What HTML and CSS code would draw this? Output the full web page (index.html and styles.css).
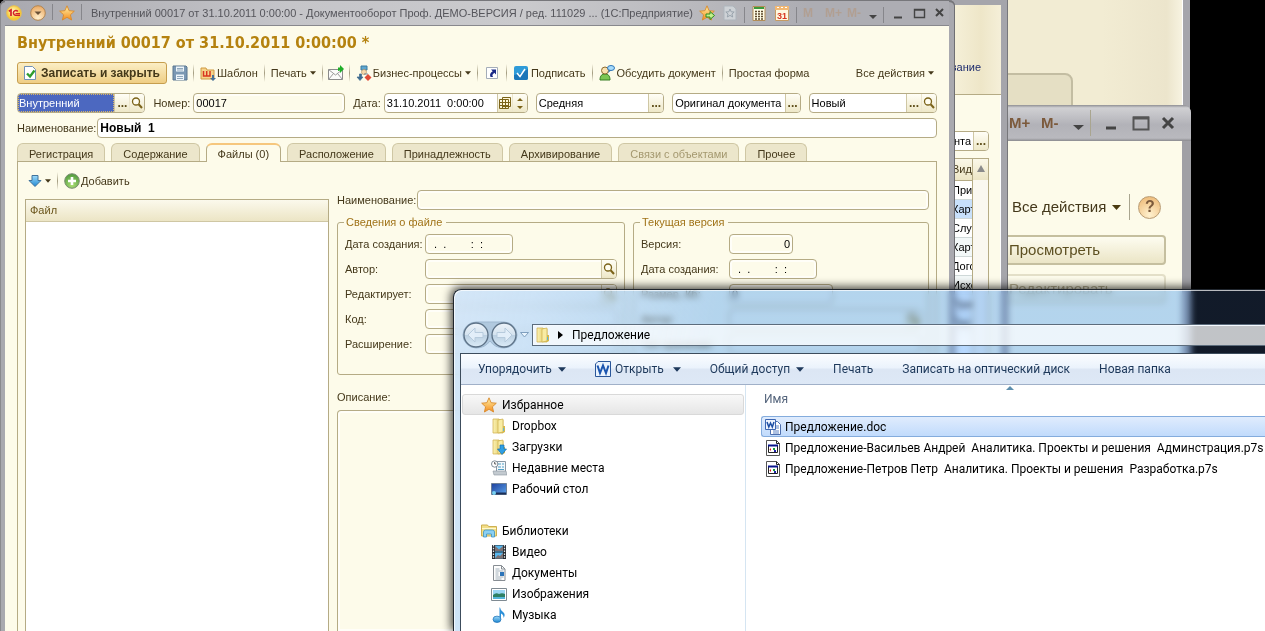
FILE: index.html
```html
<!DOCTYPE html>
<html lang="ru">
<head>
<meta charset="utf-8">
<title>Внутренний 00017 от 31.10.2011 0:00:00</title>
<link rel="stylesheet" href="styles.css">
</head>
<body>
<svg class="defs" aria-hidden="true">
  <defs>
    <linearGradient id="gFolder" x1="0" x2="1"><stop offset="0" stop-color="#fbf2b4"/><stop offset="1" stop-color="#dcc052"/></linearGradient>
    <linearGradient id="gStar" x1="0" x2="0" y1="0" y2="1"><stop offset="0" stop-color="#fff3a8"/><stop offset="1" stop-color="#f58c1e"/></linearGradient>
    <linearGradient id="gBlue" x1="0" x2="0" y1="0" y2="1"><stop offset="0" stop-color="#9fdcfb"/><stop offset="1" stop-color="#1f86d0"/></linearGradient>
    <radialGradient id="gYellow" cx=".45" cy=".4"><stop offset="0" stop-color="#fffbd0"/><stop offset="1" stop-color="#f8c82c"/></radialGradient>
    <radialGradient id="gOrange" cx=".5" cy=".85" r=".9"><stop offset="0" stop-color="#fff0cf"/><stop offset="1" stop-color="#e9a45a"/></radialGradient>
    <radialGradient id="gGreen" cx=".5" cy=".8" r=".8"><stop offset="0" stop-color="#a9dc74"/><stop offset="1" stop-color="#4f9a3c"/></radialGradient>
    <linearGradient id="gOrb" x1="0" x2="0" y1="0" y2="1"><stop offset="0" stop-color="#eef4fa"/><stop offset=".48" stop-color="#d5e3ef"/><stop offset=".5" stop-color="#bacfe1"/><stop offset="1" stop-color="#dcecf8"/></linearGradient>
    <linearGradient id="gDesk" x1="0" x2="1" y1="0" y2="1"><stop offset="0" stop-color="#1d3f9c"/><stop offset="1" stop-color="#5ba3ea"/></linearGradient>
    <symbol id="caret" viewBox="0 0 7 4"><path d="M0 0h7L3.500 4z"/></symbol>
    <symbol id="lens" viewBox="0 0 12 12"><circle cx="5" cy="4.500" r="3.500" fill="#fffdf0" stroke="#7b6319" stroke-width="1.300"/><path d="M7.600 7.300L11 11" stroke="#7b6319" stroke-width="2"/></symbol>
    <symbol id="folder" viewBox="0 0 16 16"><path d="M2 1h6l1 1h3v13H2z" fill="url(#gFolder)" stroke="#cfae45" stroke-width=".7"/><path d="M7 2l5-1v13l-5 1z" fill="#f8eca4" stroke="#cdb04c" stroke-width=".7"/><path d="M12 8h2v6l-2 1z" fill="#d5b84b"/><path d="M12.500 10v3" stroke="#5db6d6"/></symbol>
    <symbol id="star" viewBox="0 0 16 16"><path d="M8 .8l2.100 4.900 5.200.5-3.900 3.600 1.200 5.200L8 12.300 3.400 15l1.200-5.200L.7 6.200l5.200-.5z" fill="url(#gStar)" stroke="#d98a2b" stroke-width=".9"/></symbol>
    <symbol id="cert" viewBox="0 0 16 16"><path d="M1.500.5h10l3 3v12h-13z" fill="#fff" stroke="#555"/><path d="M11.500.5v3h3" fill="none" stroke="#222"/><path d="M3.500 5.500h9v7h-9z" fill="#fff" stroke="#222"/><path d="M3 4.500h10v2H3z" fill="#0a168c"/><path d="M4.500 9.500L6 8v3z" fill="#d11"/><path d="M8 8h2v2H8z" fill="#149a3b"/><path d="M9 10h2v2H9z" fill="#22a"/></symbol>
  </defs>
</svg>

<main class="desktop">

  <section class="win-back" aria-label="Фоновое окно"><div class="back-tab"></div></section>

  <section class="win-zoom" aria-label="Окно файлов">
    <header class="zoom-bar">
      <span class="mem">M+</span><span class="mem">M-</span>
      <svg class="zoom-caret" viewBox="0 0 11 5"><path d="M0 0h11L5.500 5z" fill="#444"/></svg>
      <i class="zoom-sep"></i>
      <svg class="zoom-ctl" viewBox="0 0 68 16"><path d="M1 13h10" stroke="#444" stroke-width="3"/><path d="M28.500 2.500h15v12h-15z" fill="none" stroke="#555" stroke-width="2"/><path d="M28 3h16" stroke="#555" stroke-width="3"/><path d="M58 3l10 10M68 3L58 13" stroke="#444" stroke-width="3"/></svg>
    </header>
    <div class="zoom-body">
      <div class="zoom-tools">
        <button class="zoom-link">Все действия</button>
        <svg class="zoom-caret small" viewBox="0 0 9 5"><path d="M0 0h9L4.500 5z" fill="#4a3b10"/></svg>
        <i class="zoom-sep"></i>
        <button class="help">?</button>
      </div>
      <button class="zoom-btn">Просмотреть</button>
      <button class="zoom-btn faded">Редактировать</button>
    </div>
  </section>

  <section class="win-list" aria-label="Список документов">
    <div class="list-head"><a href="#">Планирование</a></div>
    <div class="list-body">
      <div class="field list-field"><input class="right" value="Оригинал документа" aria-label="Оригинал документа"><button class="fbtn dots">...</button></div>
      <div class="list-grid">
        <table class="kinds">
          <thead><tr><th>Вид</th></tr></thead>
          <tbody><tr><td>Приказ</td></tr><tr class="sel"><td>Карточка</td></tr><tr><td>Служебная</td></tr><tr class="alt"><td>Карточка</td></tr><tr><td>Договор</td></tr><tr class="alt"><td>Исходящий</td></tr><tr><td>Приказ</td></tr><tr class="alt"><td>Письмо</td></tr></tbody>
        </table>
        <div class="scroll"><svg viewBox="0 0 8 7"><path d="M4 0l4 7H0z" fill="#8a8a8a"/></svg></div>
      </div>
    </div>
  </section>

  <section class="win-main" aria-label="Внутренний документ">
    <header class="bar">
      <svg class="i16" viewBox="0 0 16 16"><circle cx="8" cy="8" r="7.300" fill="url(#gYellow)" stroke="#e8bf52"/><path d="M2.800 6.200L5 5v6" fill="none" stroke="#d3202a" stroke-width="1.700"/><path d="M11.800 6.500A2.400 2.400 0 1 0 9.500 10.200H14" fill="none" stroke="#d3202a" stroke-width="1.500"/><path d="M9.500 8.500H14" stroke="#d3202a"/></svg>
      <svg class="i16 orb" viewBox="0 0 16 16"><circle cx="8" cy="8" r="7.300" fill="url(#gOrange)" stroke="#b28653"/><path d="M4.500 6.500h7L8 10z" fill="#6a5137"/></svg>
      <i class="bsep"></i>
      <svg class="i16 fav" viewBox="0 0 16 16"><use href="#star"/></svg>
      <i class="bsep"></i>
      <span class="caption">Внутренний 00017 от 31.10.2011 0:00:00 - Документооборот Проф. ДЕМО-ВЕРСИЯ / ред. 111029 ... (1С:Предприятие)</span>
      <span class="bar-tools">
        <svg class="i16" viewBox="0 0 16 16"><use href="#star"/><path d="M7 9h4V6.500l4.500 4-4.500 4V12H7z" fill="#c4f08a" stroke="#2e8a22"/></svg>
        <svg class="i16 pale" viewBox="0 0 16 16"><path d="M2 1h9l3 3v11H2z" fill="#dfe6ea" stroke="#a9b5bd"/><path d="M8 4l1.200 2.800 3 .2-2.300 2 .8 3L8 10.400 5.300 12l.8-3-2.300-2 3-.2z" fill="none" stroke="#8798a4"/></svg>
        <i class="bsep"></i>
        <svg class="i16" viewBox="0 0 16 16"><path d="M2 1.500h12v14H2z" fill="#fffce6" stroke="#b28d58"/><path d="M3 3h10" stroke="#3b9a3a" stroke-width="2"/><path d="M4 6.500h8M4 9h8M4 11.500h8M4 14h8" stroke="#5b472b" stroke-width="1.400" stroke-dasharray="2 1"/></svg>
        <svg class="i16 cal" viewBox="0 0 16 16"><path d="M1.500 1.500h13v14h-13z" fill="#fff8e0" stroke="#c59b64"/><path d="M1 1h14v4H1z" fill="#f2b872"/><path d="M3 2.500h10" stroke="#fff" stroke-dasharray="2 2"/><text x="8" y="14" class="cal-n">31</text></svg>
        <i class="bsep"></i>
        <span class="m">M</span><span class="m">M+</span><span class="m">M-</span>
        <svg class="drop" viewBox="0 0 8 4"><path d="M0 0h8L4 4z" fill="#444"/></svg>
        <i class="bsep"></i>
        <svg class="ctl" viewBox="0 0 54 14"><path d="M4 11.500h8" stroke="#444" stroke-width="2"/><path d="M24.500 3.500h10v8h-10zM24 4h11" fill="none" stroke="#444" stroke-width="1.400"/><path d="M46 3l7 7M53 3l-7 7" stroke="#444" stroke-width="2"/></svg>
      </span>
    </header>

    <div class="content">
      <h1>Внутренний 00017 от 31.10.2011 0:00:00 *</h1>

      <div class="toolbar">
        <button class="primary"><svg class="i14" viewBox="0 0 14 14"><path d="M1.500.5h8l3 3v10h-11z" fill="#fff" stroke="#7191b5"/><path d="M4 7.500l3 3 4.500-6" fill="none" stroke="#2f9c2c" stroke-width="2.400"/></svg>Записать и закрыть</button>
        <button class="tool solo"><svg class="i16" viewBox="0 0 16 16"><path d="M1 1h13l1 1v13H1z" fill="#7b98b3" stroke="#5b7690"/><path d="M4 1.500h8v5H4zM4 9.500h8v5.500H4z" fill="#eef5fa"/><path d="M5 3.500h6M5 5h6M5 11.500h6M5 13.500h6" stroke="#8fa7bb"/></svg></button>
        <i class="sep"></i>
        <button class="tool"><svg class="i16" viewBox="0 0 16 16"><path d="M1 3h5l1 2h7v9H1z" fill="#f6d48b" stroke="#cf9a43"/><path d="M3.500 6v5h6.500V6M6.700 6v5" fill="none" stroke="#d8341f" stroke-width="1.500"/><path d="M12 10v3h-2l3 3 3-3h-2v-3z" fill="#4a7397"/></svg>Шаблон</button>
        <i class="sep"></i>
        <button class="tool">Печать<svg class="caret"><use href="#caret"/></svg></button>
        <i class="sep"></i>
        <button class="tool solo"><svg class="i16" viewBox="0 0 16 16"><path d="M.5 4.500h14v10H.5z" fill="#fbfbfb" stroke="#8b8b8b"/><path d="M.5 4.500L7.500 10l7-5.500M.5 14.500l5-6M14.500 14.500l-5-6" fill="none" stroke="#999"/><path d="M10 6V2.500h2V0l4 4-4 4V5.500z" fill="#1fae28"/></svg></button>
        <i class="sep"></i>
        <button class="tool"><svg class="i16" viewBox="0 0 16 16"><path d="M5 1h6v4H5z" fill="#5ea7cf" stroke="#3a7ba0"/><circle cx="8" cy="7" r="2.500" fill="#f6d9ae" stroke="#b58a55" stroke-width=".6"/><path d="M3.500 9v3H1l3 3.500L7 12H5.500V9zM8 9h4" fill="#3f6b8f" stroke="#3f6b8f" stroke-width=".7"/><path d="M12 9l3.500 3.500L12 16l-3.500-3.500z" fill="#e14b36"/></svg>Бизнес-процессы<svg class="caret"><use href="#caret"/></svg></button>
        <i class="sep"></i>
        <button class="tool link"><svg class="i14" viewBox="0 0 14 14"><path d="M1.500 1.500h11v11h-11z" fill="#fff" stroke="#a4adb8"/><path d="M6 3.500h5v5L9.300 6.800 7.300 9 8 11H5.500C4.500 8.500 5 7 7.700 5.200z" fill="#1a2a86"/></svg></button>
        <i class="sep"></i>
        <button class="tool sign"><svg class="i14" viewBox="0 0 14 14"><rect width="14" height="14" rx="2" fill="#2f9bd8"/><path d="M0 9Q7 8 14 3v9a2 2 0 0 1-2 2H2a2 2 0 0 1-2-2z" fill="#1b76b8"/><path d="M3 7l3 3.500L11 3" fill="none" stroke="#fff" stroke-width="1.500"/></svg>Подписать</button>
        <i class="sep"></i>
        <button class="tool"><svg class="i16" viewBox="0 0 16 16"><path d="M1 15c0-4.500 2-6 5-6s5 1.500 5 6z" fill="#7cc653" stroke="#387e24"/><circle cx="6" cy="5.500" r="3.500" fill="#fbe2ae" stroke="#8c6a30"/><ellipse cx="12" cy="3" rx="3.500" ry="2.500" fill="#a8dcfb" stroke="#2f76b8"/><path d="M10 5L9 8l3-2.500z" fill="#2f76b8"/></svg>Обсудить документ</button>
        <i class="sep"></i>
        <button class="tool">Простая форма</button>
        <button class="tool all">Все действия<svg class="caret"><use href="#caret"/></svg></button>
      </div>

      <div class="row">
        <div class="field grow1"><input class="picked" value="Внутренний" aria-label="Вид документа"><button class="fbtn dots">...</button><button class="fbtn bare" aria-label="Открыть"><svg class="i12"><use href="#lens"/></svg></button></div>
        <label for="num">Номер:</label>
        <div class="field soft num"><input id="num" value="00017"></div>
        <label for="date">Дата:</label>
        <div class="field date"><input id="date" value="31.10.2011  0:00:00"><button class="fbtn" aria-label="Календарь"><svg class="i12" viewBox="0 0 12 12"><path d="M3.500.5h8v9h-8z" fill="#fff7d8" stroke="#7b6319"/><path d="M.5 2.500h9v9h-9zM.5 5.500h11M.5 8.500h9M3.500 2v10M6.500 2v10" fill="none" stroke="#7b6319"/></svg></button><button class="fbtn bare" aria-label="Изменить"><svg class="i12" viewBox="0 0 12 12"><path d="M3 4h6L6 1zM3 9h6l-3 3z" fill="#7b6319"/></svg></button></div>
        <div class="field grow1"><input value="Средняя" aria-label="Важность"><button class="fbtn dots">...</button></div>
        <div class="field grow1"><input value="Оригинал документа" aria-label="Форма"><button class="fbtn dots">...</button></div>
        <div class="field grow1"><input value="Новый" aria-label="Состояние"><button class="fbtn dots">...</button><button class="fbtn bare" aria-label="Открыть"><svg class="i12"><use href="#lens"/></svg></button></div>
      </div>

      <div class="row name-row">
        <label for="name">Наименование:</label>
        <div class="field wide"><input id="name" class="strong" value="Новый  1"></div>
      </div>

      <nav class="tabs" role="tablist">
        <button role="tab">Регистрация</button><button role="tab">Содержание</button><button role="tab" class="on" aria-selected="true">Файлы (0)</button><button role="tab">Расположение</button><button role="tab">Принадлежность</button><button role="tab">Архивирование</button><button role="tab" class="off">Связи с объектами</button><button role="tab">Прочее</button>
      </nav>

      <div class="panel">
        <div class="files">
          <div class="file-tools">
            <button class="tool"><svg class="i14" viewBox="0 0 14 14"><path d="M4 1.500h6v5h3l-6 6-6-6h3z" fill="url(#gBlue)" stroke="#41729b"/></svg><svg class="caret"><use href="#caret"/></svg></button>
            <i class="sep"></i>
            <button class="tool"><svg class="i16" viewBox="0 0 16 16"><circle cx="8" cy="8" r="7.300" fill="url(#gGreen)" stroke="#7a8c72"/><path d="M8 4v8M4 8h8" stroke="#fff" stroke-width="2.600"/></svg>Добавить</button>
          </div>
          <div class="file-box"><table class="file-table"><thead><tr><th>Файл</th></tr></thead></table></div>
        </div>

        <div class="details">
          <div class="row tight"><label for="fname">Наименование:</label><div class="field soft wide"><input id="fname"></div></div>
          <div class="groups">
            <fieldset class="g1">
              <legend>Сведения о файле</legend>
              <div class="line"><label for="f1">Дата создания:</label><div class="field soft w88"><input id="f1" value="  .  .        :  :"></div></div>
              <div class="line"><label for="f2">Автор:</label><div class="field soft wide"><input id="f2"><button class="fbtn" aria-label="Открыть"><svg class="i12"><use href="#lens"/></svg></button></div></div>
              <div class="line"><label for="f3">Редактирует:</label><div class="field soft wide"><input id="f3"><button class="fbtn" aria-label="Открыть"><svg class="i12"><use href="#lens"/></svg></button></div></div>
              <div class="line"><label for="f4">Код:</label><div class="field soft wide"><input id="f4"></div></div>
              <div class="line"><label for="f5">Расширение:</label><div class="field soft wide"><input id="f5"></div></div>
            </fieldset>
            <fieldset class="g2">
              <legend>Текущая версия</legend>
              <div class="line"><label for="v1">Версия:</label><div class="field soft w64"><input id="v1" class="right" value="0"></div></div>
              <div class="line"><label for="v2">Дата создания:</label><div class="field soft w88"><input id="v2" value="  .  .        :  :"></div></div>
              <div class="line"><label for="v3">Размер, Кб:</label><div class="field soft w104"><input id="v3" value="0"></div></div>
              <div class="line"><label for="v4">Автор:</label><div class="field soft wide"><input id="v4"><button class="fbtn bare" aria-label="Открыть"><svg class="i12"><use href="#lens"/></svg></button></div></div>
              <div class="line"><label for="v5">Тип хранения:</label><div class="field soft wide"><input id="v5"></div></div>
            </fieldset>
          </div>
          <label class="desc-label" for="desc">Описание:</label>
          <textarea id="desc"></textarea>
        </div>
      </div>
    </div>
  </section>

  <div class="glass-tint"></div>
  <section class="explorer" aria-label="Предложение">
    <header class="address">
      <svg class="nav-orbs" viewBox="0 0 56 28"><path d="M14 1h28a13 13 0 0 1 0 26q-9 0-14-7-5 7-14 7a13 13 0 0 1 0-26z" fill="#a3bdd4" stroke="#8aa5be" opacity=".7"/><circle cx="14" cy="14" r="12" fill="url(#gOrb)" stroke="#5d7287" stroke-width="1.300"/><circle cx="42" cy="14" r="12" fill="url(#gOrb)" stroke="#5d7287" stroke-width="1.300"/><path d="M6 14l7-7v4.500h8v5h-8V21z" fill="#e2eef9" stroke="#b7cbdd"/><path d="M50 14l-7-7v4.500h-8v5h8V21z" fill="#e2eef9" stroke="#b7cbdd"/></svg>
      <svg class="orb-caret" viewBox="0 0 9 6"><path d="M.5.5h8l-4 4.500z" fill="#e9f4fd" stroke="#7f9fbe"/></svg>
      <div class="path"><svg class="i16"><use href="#folder"/></svg><svg class="chev" viewBox="0 0 5 8"><path d="M0 0l5 4-5 4z"/></svg><span>Предложение</span></div>
    </header>
    <div class="pane">
      <div class="commands">
        <button>Упорядочить<svg class="cc"><use href="#caret"/></svg></button>
        <button class="c-open"><svg class="i16" viewBox="0 0 16 16"><path d="M.5 3L3 .5h12.500v15H.5z" fill="#eaf3fd" stroke="#2a5699"/><path d="M2.500 4.500L5 12l3-7.500L11 12l2.500-7.500" fill="none" stroke="#1c56b0" stroke-width="2"/></svg>Открыть<svg class="cc far"><use href="#caret"/></svg></button>
        <button>Общий доступ<svg class="cc"><use href="#caret"/></svg></button>
        <button>Печать</button>
        <button>Записать на оптический диск</button>
        <button>Новая папка</button>
      </div>
      <div class="split">
        <nav class="tree">
          <a href="#" class="root cur"><svg class="i16"><use href="#star"/></svg>Избранное</a>
          <a href="#"><svg class="i16"><use href="#folder"/></svg>Dropbox</a>
          <a href="#"><svg class="i16" viewBox="0 0 16 16"><use href="#folder"/><path d="M9 6h4v4h2.500L11 15.500 6.500 10H9z" fill="#2f9fe4" stroke="#1470b0" stroke-width=".7"/></svg>Загрузки</a>
          <a href="#"><svg class="i16" viewBox="0 0 16 16"><path d="M5.500 1.500h9v10h-9z" fill="#f4f8fb" stroke="#8a98a4"/><path d="M7 4h3M11 4h2M7 7h3M11 7h2M7 9.500h6" stroke="#4f9fc6"/><path d="M2 11h13l1 4H3z" fill="#c3cad0" stroke="#8c959d" stroke-width=".6"/><circle cx="3.700" cy="4" r="3.200" fill="#fff" stroke="#7f8c97"/><path d="M3.700 2v2h1.500" fill="none" stroke="#555"/></svg>Недавние места</a>
          <a href="#"><svg class="i16" viewBox="0 0 16 16"><path d="M.5 2.500h15v11H.5z" fill="url(#gDesk)" stroke="#6d7f96"/><path d="M1 12.500h14" stroke="#1b2f57" stroke-width="2"/><circle cx="3" cy="12" r="2" fill="#79d1f2"/></svg>Рабочий стол</a>
          <a href="#" class="root later"><svg class="i16" viewBox="0 0 16 16"><path d="M.5 2h6l1 1.500h8V13H.5z" fill="#f3de86" stroke="#cdb052"/><path d="M1 5.500h14" stroke="#fff8cf"/><path d="M2.500 14V9q0-2 2-2h7q2 0 2 2v5h-3v-3h-5v3z" fill="#8cd0f2" stroke="#3c93c4" stroke-width=".8"/></svg>Библиотеки</a>
          <a href="#"><svg class="i16" viewBox="0 0 16 16"><path d="M1 1h14v14H1z" fill="#26292e"/><path d="M4 1.500h8v6H4zM4 8.500h8v6H4z" fill="#58b7ee"/><path d="M4 2l4 3.500L12 2v5H4zM4 14l3-3 2 1 3-3v5.500H4z" fill="#8a5b4b" opacity=".75"/><path d="M2.500 1v14M13.500 1v14" stroke="#dfe6ea" stroke-width="1.300" stroke-dasharray="1.500 1.300"/></svg>Видео</a>
          <a href="#"><svg class="i16" viewBox="0 0 16 16"><path d="M2.500.5h8l3.500 3.500v11.500H2.500z" fill="#fdfdfd" stroke="#878d93"/><path d="M10.500.5V4H14" fill="none" stroke="#878d93"/><path d="M4.500 4h4M4.500 6h8M4.500 12h8M4.500 14h6M4.500 8h3M4.500 10h3" stroke="#9aa9b5" stroke-width=".9"/><path d="M9 7h4v4H9z" fill="#2c74b9"/></svg>Документы</a>
          <a href="#"><svg class="i16" viewBox="0 0 16 16"><path d="M.5 2.500h15v12H.5z" fill="#fff" stroke="#7f8a92"/><path d="M2 4h12v9H2z" fill="#9ad6f5"/><path d="M2 9q3-3 6-1 3-1.500 6 0v3H2z" fill="#2e8064"/><path d="M2 11h12v2H2z" fill="#54b5da"/></svg>Изображения</a>
          <a href="#"><svg class="i16" viewBox="0 0 16 16"><path d="M9 .5q.5 3 3 4.500 3 2.500.5 6 .3-3.500-2.500-4.500v6H8.500V.5z" fill="#2c8fd8"/><ellipse cx="6" cy="12.300" rx="4" ry="3.200" fill="url(#gBlue)" stroke="#1b6fb5" stroke-width=".7"/></svg>Музыка</a>
        </nav>
        <div class="listing">
          <svg class="sorted" viewBox="0 0 8 4"><path d="M0 4l4-4 4 4z" fill="#5e8fae"/></svg>
          <table class="docs">
            <thead><tr><th>Имя</th></tr></thead>
            <tbody>
              <tr class="sel"><td><span><svg class="i16" viewBox="0 0 16 16"><path d="M5.500 2.500h7l3 3v10h-10z" fill="#fff" stroke="#4d6fae"/><path d="M11 7h3M11 9h3M8 12h6M8 14h6" stroke="#5d83c4"/><path d="M.5.5h10v10H.5z" fill="#eef4ff" stroke="#3d66b1"/><path d="M2 3l1.800 5L5.500 4l1.800 4L9 3" fill="none" stroke="#1d4fa5" stroke-width="1.500"/></svg>Предложение.doc</span></td></tr>
              <tr><td><span><svg class="i16"><use href="#cert"/></svg>Предложение-Васильев Андрей  Аналитика. Проекты и решения  Админстрация.p7s</span></td></tr>
              <tr><td><span><svg class="i16"><use href="#cert"/></svg>Предложение-Петров Петр  Аналитика. Проекты и решения  Разработка.p7s</span></td></tr>
            </tbody>
          </table>
        </div>
      </div>
    </div>
  </section>
</main>
</body>
</html>
```
FILE: styles.css
```css
* { box-sizing: border-box; }
body { margin: 0; background: #000; font: 11px/14px "Liberation Sans", Arial, sans-serif; color: #44381a; }
button, input, textarea { font: inherit; color: inherit; margin: 0; padding: 0; border: 0; background: none; border-radius: 0; outline: 0; }
button { white-space: nowrap; }
a { color: inherit; text-decoration: none; }
svg { flex: none; display: block; }
.defs { position: absolute; width: 0; height: 0; }
.i12 { width: 12px; height: 12px; }
.i14 { width: 14px; height: 14px; }
.i16 { width: 16px; height: 16px; }

.desktop { position: relative; height: 100vh; overflow: hidden; background: #000; }
.desktop > * { position: absolute; }

/* windows behind the document */
.win-back { left: 980px; top: 0; width: 210px; height: 140px; border-right: 7px solid #a5a5ab; background: linear-gradient(90deg, #f2ecd3 60%, #ece5cc 92%, #f8f4e2); display: flex; align-items: flex-end; box-shadow: inset -1px 0 #fff; }
.back-tab { width: 93px; height: 67px; border: 2px solid #c3bda2; border-radius: 0 8px 0 0; background: #e5dfc4; }

.win-zoom { left: 980px; top: 105px; bottom: 0; width: 211px; display: flex; flex-direction: column; background: #a0a0a5; border-radius: 0 8px 0 0; padding-right: 9px; filter: blur(0.6px); }
.zoom-bar { height: 36px; margin-right: -9px; display: flex; align-items: center; padding-left: 29px; background: linear-gradient(#8f8f93, #d0d0d3 8%, #b2b2b8 55%, #b9b9be 92%, #8a8a8e); border-radius: 0 8px 0 0; }
.mem { font-size: 15px; font-weight: bold; color: #7c5a3c; width: 32px; }
.zoom-caret { width: 11px; height: 5px; margin: 8px 6px 0 0; }
.zoom-caret.small { width: 9px; margin: 0 8px 0 6px; }
.zoom-sep { width: 1px; height: 26px; background: #a9a58f; margin-right: 14px; }
.zoom-ctl { width: 68px; height: 16px; overflow: visible; }
.zoom-body { flex: 1; background: #fdfbea; padding: 50px 16px 0 24px; }
.zoom-tools { display: flex; align-items: center; height: 32px; padding-left: 8px; margin-bottom: 12px; }
.zoom-link { font-size: 15px; }
.zoom-tools .zoom-sep { margin: 0 8px 0 0; }
.help { width: 23px; height: 23px; border-radius: 50%; border: 1px solid #b99c74; background: radial-gradient(circle at 50% 85%, #fff1cf, #ecb56f); font-size: 16px; font-weight: bold; color: #7c5a3c; }
.zoom-btn { display: block; width: 100%; height: 30px; border: 2px solid #c5bf9f; border-radius: 4px; background: linear-gradient(#fdfcf0, #ebe5c6); font-size: 15px; text-align: left; padding-left: 3px; margin-bottom: 9px; color: #5d5021; }
.zoom-btn.faded { opacity: 0.45; }

.win-list { left: 800px; top: 0; bottom: 0; width: 207px; border: solid #a5a5ab; border-width: 5px 6px 0 0; box-shadow: inset -1px 0 #fff, 1px 0 #77777b; background: #fdfbea; display: flex; flex-direction: column; }
.list-head { height: 90px; border-bottom: 1px solid #b5ab85; background: linear-gradient(90deg, #f6f1da 75%, #eee6c8 90%, #f5efd8); display: flex; align-items: center; justify-content: flex-end; padding: 36px 20px 0 0; color: #1c2a6c; }
.list-head a { padding-bottom: 2px; }
.list-body { flex: 1; padding: 36px 12px 0 50px; display: flex; flex-direction: column; gap: 7px; }
.list-field .right { padding-right: 5px; }
.list-grid { flex: 1; display: flex; border: 1px solid #b5ab85; background: #fff; color: #000; }
.kinds { flex: 1; table-layout: fixed; width: 0; border-collapse: collapse; align-self: flex-start; }
.kinds th { height: 21px; background: linear-gradient(#fbf8e8, #ece5c5); border-bottom: 1px solid #b5ab85; text-align: left; font-weight: normal; color: #44381a; }
.kinds th, .kinds td { padding: 0 0 0 101px; overflow: hidden; white-space: nowrap; }
.kinds td { height: 19px; border-bottom: 1px solid #cfd8d8; }
.kinds .alt td { background: #f3f8f8; }
.kinds .sel td { background: #c8e0fb; }
.scroll { width: 16px; border-left: 1px solid #b5ab85; background: linear-gradient(#fbf8e8, #ece5c5) 0 0 / 100% 21px no-repeat #faf8f0; padding: 6px 4px; }
.scroll svg { width: 8px; height: 7px; }

/* document window */
.win-main { left: 0; top: 0; bottom: 0; width: 955px; background: #a9a9af; border-radius: 6px 6px 0 0; padding: 0 6px 0 5px; display: flex; flex-direction: column; box-shadow: inset 0 2px #77777b, inset 1px 0 #8a8a8e, inset -1px 0 #6f6f73; }
.bar { height: 25px; flex: none; display: flex; align-items: center; background: linear-gradient(90deg, #a9a9af, #c5c5c9 30%, #cacacd 55%, #adadb3 85%); border-bottom: 1px solid #88888d; margin-top: 1px; color: #55555b; }
.orb { margin-left: 8px; }
.bar > .i16:first-child { margin-left: 1px; }
.bsep { width: 1px; height: 16px; background: #86868b; margin: 3px 6px 0; flex: none; align-self: flex-start; }
.caption { margin-left: 3px; flex: 1; white-space: nowrap; }
.bar-tools { display: flex; align-items: center; }
.bar-tools .i16 { margin-left: 7px; }
.bar-tools .i16:first-child { margin-left: 0; }
.bar-tools .bsep + .i16 { margin-left: 0; }
.pale { opacity: 0.6; }
.cal-n { font: bold 9px "Liberation Sans", sans-serif; fill: #d8341f; text-anchor: middle; }
.m { color: #b19f92; font-size: 12px; font-weight: bold; width: 22px; }
.drop { width: 8px; height: 4px; margin: 7px 0 0 0; }
.ctl { width: 54px; height: 14px; margin-right: 5px; }

.content { flex: 1; min-height: 0; background: #fdfbea; padding: 0 12px; display: flex; flex-direction: column; }
h1 { margin: 0; font: bold 16px/34px "DejaVu Sans Condensed", "DejaVu Sans", sans-serif; color: #b5820f; white-space: nowrap; }
.toolbar { display: flex; align-items: center; height: 26px; }
.tool { display: flex; align-items: center; gap: 1px; height: 22px; padding: 0 6px; }
.tool.solo { padding: 0 5px; }
.tool.link { padding: 0 7px; }
.tool.sign { gap: 3px; padding: 0 7px; }
.tool.all { margin-left: auto; padding-right: 3px; }
.sep { width: 1px; height: 18px; background: linear-gradient(#fdfbea, #a39c80, #fdfbea); flex: none; }
.caret { width: 6px; height: 4px; fill: #44381a; margin-left: 2px; }
.primary { display: flex; align-items: center; gap: 4px; height: 22px; width: 150px; padding-left: 5px; border: 1px solid #c69e4e; border-radius: 3px; background: linear-gradient(#fbeec4, #efce85); font-weight: bold; font-size: 12px; }

.row { display: flex; align-items: center; gap: 8px; margin-top: 7px; color: #44381a; }
.row label { margin-right: -5px; white-space: nowrap; }
.name-row { margin-top: 5px; }
.name-row label, .row.tight label { margin-right: -7px; }
.field { display: flex; height: 20px; border: 1px solid #b5ab85; border-radius: 4px; background: #fff; overflow: hidden; color: #000; flex: none; min-width: 0; }
.field.soft { background: #fdfbea; box-shadow: inset 0 0 0 2px #fffef8; }
.field input { flex: 1; min-width: 0; width: 0; padding-left: 2px; white-space: pre; }
.field .picked { background: #4c68c0; color: #fff; border: 1px dotted #d9b56a; padding-left: 0; }
.field .strong { font-weight: bold; font-size: 12px; }
.field .right { text-align: right; padding-right: 2px; }
.row .grow1 { flex: 1 1 0; }
.num { width: 152px; }
.date { width: 144px; }
.field.wide { flex: 1; }
.w64 { width: 64px; }
.w88 { width: 88px; }
.w104 { width: 104px; }
.fbtn { width: 15px; display: flex; align-items: center; justify-content: center; background: linear-gradient(#fffef6, #eee8c8); border-left: 1px solid #cfc7a4; color: #5d4d18; }
.fbtn.bare { border-left-color: #ece6cc; }
.dots { font-size: 12px; font-weight: bold; }

.tabs { display: flex; gap: 6px; margin-top: 5px; height: 19px; flex: none; position: relative; }
.tabs button { height: 18px; padding: 2px 11px 0; border: 1px solid #cfc7a4; border-bottom: 0; border-radius: 6px 6px 0 0; background: #ece6cb; }
.tabs .on { height: 19px; background: #fdfbea; border-color: #b5ab85; border-top: 2px solid #f6c77d; padding-top: 0; }
.tabs .off { color: #a4986f; }
.panel { flex: 1; min-height: 0; border: 1px solid #b5ab85; border-bottom: 0; margin-top: -1px; padding: 0 7px; display: grid; grid-template-columns: 304px 1fr; gap: 8px; }
.files { display: flex; flex-direction: column; min-height: 0; }
.file-tools { height: 37px; display: flex; align-items: center; }
.file-tools .tool:first-child { padding-left: 3px; }
.file-box { flex: 1; border: 1px solid #b5ab85; border-bottom: 0; background: #fff; }
.file-table { width: 100%; border-collapse: collapse; }
.file-table th { height: 21px; padding: 0 4px; border-bottom: 1px solid #cfc7a4; background: linear-gradient(#fbf9ec, #ece5c5); font-weight: normal; text-align: left; color: #6b561c; }
.details { display: flex; flex-direction: column; min-height: 0; padding-top: 28px; }
.tight { margin-top: 0; }
.groups { display: grid; grid-template-columns: 288px 1fr; gap: 8px; margin-top: 5px; }
fieldset { margin: 0; min-width: 0; height: 160px; padding: 5px 7px 0; border: 1px solid #b5ab85; border-radius: 3px; }
legend { padding: 0 4px 0 2px; margin-left: -1px; height: 14px; color: #a07318; }
.line { display: flex; align-items: center; margin-bottom: 5px; }
.g1 label { width: 80px; white-space: nowrap; flex: none; }
.g2 label { width: 88px; white-space: nowrap; flex: none; }
.desc-label { margin-top: 15px; }
textarea { flex: 1; margin-top: 6px; border: 1px solid #b5ab85; border-bottom: 0; border-radius: 4px 4px 0 0; box-shadow: inset 0 0 0 2px #fffef8; resize: none; }

/* explorer window */
.glass-tint { left: 453px; right: 0; top: 289px; bottom: 0; border-radius: 8px 0 0 0; mix-blend-mode: multiply; background: #c4e2ff; }
.explorer { left: 453px; right: 0; top: 289px; bottom: 0; border: solid #20262e; border-width: 1px 0 0 1px; border-radius: 8px 0 0 0; backdrop-filter: blur(3px); box-shadow: inset 1px 1px rgba(255, 255, 255, 0.7), -1px -1px 10px 1px rgba(0, 0, 0, 0.75); background: linear-gradient(100deg, rgba(216, 232, 250, 0.8), rgba(208, 228, 250, 0.75) 80px, rgba(110, 165, 255, 0.16) 260px); padding: 31px 0 0 6px; display: flex; flex-direction: column; font: 12px/16px Roboto, "Noto Sans", sans-serif; color: #000; }
.address { display: flex; align-items: center; height: 28px; padding-left: 2px; flex: none; }
.nav-orbs { width: 56px; height: 28px; }
.orb-caret { width: 9px; height: 6px; margin: 0 3px 0 2px; }
.path { flex: 1; height: 22px; border: 1px solid #5c6c7c; border-right: 0; background: rgba(255, 255, 255, 0.74); box-shadow: inset 1px 1px #f5faff; display: flex; align-items: center; }
.path .i16 { margin-left: 2px; }
.chev { width: 5px; height: 8px; margin: 0 9px 0 7px; }
.pane { flex: 1; min-height: 0; margin-top: 4px; border: 1px solid #3c4c5c; border-width: 1px 0 0 1px; background: #fff; display: flex; flex-direction: column; }
.commands { height: 31px; flex: none; display: flex; align-items: center; gap: 29px; padding-left: 17px; border-bottom: 1px solid #a0b0c8; background: linear-gradient(#fbfdff, #ebf3fc 45%, #dce6f4 52%, #dde8f6); color: #1e395b; }
.commands button { display: flex; align-items: center; }
.c-open .i16 { margin-right: 4px; }
.cc { width: 8px; height: 5px; margin-left: 6px; fill: #1e395b; }
.cc.far { margin-left: 9px; }
.split { flex: 1; min-height: 0; display: grid; grid-template-columns: 285px 1fr; }
.tree { border-right: 1px solid #d5e5f2; padding: 9px 1px 0; overflow: hidden; }
.tree a { height: 21px; display: flex; align-items: center; gap: 5px; padding-left: 29px; }
.tree .root { padding-left: 19px; }
.tree .root.cur { padding-left: 18px; }
.tree .later { margin-top: 21px; }
.tree .cur { border: 1px solid #d9d9d9; border-radius: 3px; background: linear-gradient(#f8f8f8, #e6e6e6); }
.listing { position: relative; padding-left: 15px; overflow: hidden; }
.sorted { position: absolute; left: 50%; top: 1px; width: 8px; height: 4px; }
.docs { width: 100%; border-collapse: separate; border-spacing: 0; }
.docs th { height: 31px; padding: 0 0 4px 3px; text-align: left; font-weight: normal; color: #55657c; }
.docs td { height: 21px; padding: 0 0 0 3px; border: 1px solid transparent; border-right: 0; white-space: pre; }
.docs td span { display: flex; align-items: center; gap: 4px; height: 19px; }
.docs .sel td { border-color: #84acdd; border-radius: 3px 0 0 3px; background: linear-gradient(#e0ecfd, #c1dbfc); }
```
